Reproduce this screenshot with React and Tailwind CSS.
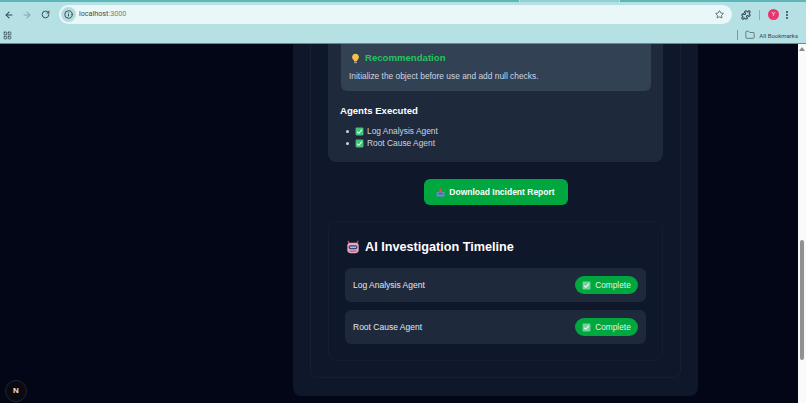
import React from "react";
import { ArrowLeft, ArrowRight, RotateCw, Info, Star, Puzzle, EllipsisVertical, Folder, LayoutGrid } from "lucide-react";

const AGENTS = ["Log Analysis Agent", "Root Cause Agent"];

function CheckEmoji({ className }) {
    return (
        <svg viewBox="0 0 16 16" className={className}>
            <rect x="1" y="1" width="14" height="14" rx="2" fill="#3fc47a" />
            <path d="M3.8 8.4 6.8 11.2 12.4 4.8" fill="none" stroke="#f1f5f9" strokeWidth="2" />
        </svg>
    );
}

function PillCheck() {
    return (
        <svg viewBox="0 0 16 16" className="w-[9px] h-[9px] shrink-0">
            <rect x="1" y="1" width="14" height="14" rx="1.5" fill="#6fd39a" />
            <path d="M3.8 8.4 6.8 11.2 12.4 4.8" fill="none" stroke="#f1f5f9" strokeWidth="2" />
        </svg>
    );
}

function Bulb() {
    return (
        <svg viewBox="0 0 16 16" className="w-[11px] h-[11px] shrink-0">
            <path d="M8 1a5 5 0 0 0-3 9c.6.5.9 1 1 1.6h4c.1-.6.4-1.1 1-1.6A5 5 0 0 0 8 1z" fill="#f8c04a" />
            <rect x="6" y="12" width="4" height="3" rx="1" fill="#9aa3ad" />
        </svg>
    );
}

function Tray() {
    return (
        <svg viewBox="0 0 16 16" className="w-[9px] h-[9px] shrink-0">
            <rect x="1" y="7" width="14" height="8" rx="1" fill="#5b8fd6" />
            <rect x="4" y="9" width="8" height="2" fill="#2f5fa8" />
            <path d="M6.5 1h3v4H12L8 9 4 5h2.5z" fill="#d9534f" />
        </svg>
    );
}

function Robot() {
    return (
        <svg viewBox="0 0 16 16" className="w-[14px] h-[14px] shrink-0">
            <path d="M2 1l2 3M14 1l-2 3" stroke="#d0475f" strokeWidth="1.5" />
            <rect x="1.5" y="3" width="13" height="12" rx="3.5" fill="#e6a9c4" />
            <rect x="3" y="6" width="10" height="4.5" rx="2" fill="#3b3f73" />
            <rect x="4.5" y="7.5" width="7" height="1.5" fill="#b9c6f5" />
            <rect x="4" y="12" width="8" height="1.5" fill="#a56a92" />
        </svg>
    );
}

export default function App() {
    return (
        <div className="relative w-[806px] h-[403px] overflow-hidden flex flex-col font-['Liberation_Sans',sans-serif]">
            {/* Browser chrome */}
            <div className="h-[44px] shrink-0 bg-[#b5e0e4] border-b border-[#5f8f96] flex flex-col">
                <div className="h-[2px] flex gap-[1px] bg-[#b5e0e4]">
                    <div className="w-[519px] bg-[#5cb8b8]" />
                    <div className="w-[99px] bg-[#8fd0d0]" />
                    <div className="flex-1 bg-[#5cb8b8]" />
                </div>
                <div className="h-[25px] flex items-center text-[#33474d]">
                    <ArrowLeft className="w-[10px] h-[10px] ml-[4px]" strokeWidth={2.5} />
                    <ArrowRight className="w-[10px] h-[10px] ml-[8px] text-[#85a5aa]" strokeWidth={2.5} />
                    <RotateCw className="w-[9px] h-[9px] ml-[9px]" strokeWidth={2.5} />
                    <div className="ml-[9px] w-[673px] h-[19px] rounded-full bg-[#e9f7f8] flex items-center">
                        <div className="ml-[2px] w-[15px] h-[15px] rounded-full bg-[#b5dde0] flex items-center justify-center">
                            <Info className="w-[9px] h-[9px]" strokeWidth={2.5} />
                        </div>
                        <span className="ml-[3px] text-[7.2px] text-[#3c4a4e] font-['Roboto',sans-serif]">
                            localhost<span className="text-[#6f8085]">:3000</span>
                        </span>
                        <Star className="w-[9px] h-[9px] ml-auto mr-[8px]" strokeWidth={2} />
                    </div>
                    <Puzzle className="w-[10px] h-[10px] ml-[9px]" strokeWidth={2.5} />
                    <div className="w-[1px] h-[10px] bg-[#7fb3b8] ml-[8px]" />
                    <div className="ml-[8px] w-[11px] h-[11px] rounded-full bg-[#e8356f] text-white text-[6px] flex items-center justify-center">
                        Y
                    </div>
                    <EllipsisVertical className="w-[10px] h-[10px] ml-[3px]" strokeWidth={3} />
                </div>
                <div className="flex-1 flex items-center text-[#33474d]">
                    <LayoutGrid className="w-[9px] h-[9px] ml-[3px]" strokeWidth={2} />
                    <div className="w-[1px] h-[10px] bg-[#5fa5aa] ml-auto" />
                    <Folder className="w-[10px] h-[10px] ml-[7px]" strokeWidth={1.5} />
                    <span className="ml-[4px] mr-[8px] text-[6px] font-['Roboto',sans-serif]">All Bookmarks</span>
                </div>
            </div>

            <div className="flex-1 min-h-0 flex">
                {/* Page */}
                <div className="flex-1 bg-[#020617] pl-[293px] pr-[100px] pb-[7px] flex">
                    <div className="flex-1 bg-[#0f172a] rounded-b-lg px-[17px] pb-[18px] flex">
                        <div className="flex-1 border-x border-b border-[#162032] rounded-b-lg px-[17px] pb-[16px] flex flex-col">
                            <div className="h-[118px] bg-[#1e293b] rounded-b-lg pl-[13px] pr-[12px] flex flex-col">
                                <div className="h-[47px] bg-[#334155] rounded-b-md px-[8px] flex flex-col">
                                    <div className="mt-[7px] flex items-center gap-[4px] text-[#22c55e]">
                                        <div className="ml-[1px]"><Bulb /></div>
                                        <span className="text-[9.6px] leading-[14px] font-bold">Recommendation</span>
                                    </div>
                                    <p className="mt-[5px] text-[8.4px] leading-[12px] text-[#cbd5e1]">
                                        Initialize the object before use and add null checks.
                                    </p>
                                </div>
                                <h3 className="mt-[13px] -ml-[1px] text-[9.6px] leading-[14px] font-bold text-white">Agents Executed</h3>
                                <ul className="mt-[7px] flex flex-col">
                                    {AGENTS.map((agent) => (
                                        <li key={agent} className="h-[12.5px] flex items-center text-[8.4px] text-[#cbd5e1]">
                                            <span className="ml-[5px] w-[3px] h-[3px] rounded-full bg-[#cbd5e1]" />
                                            <CheckEmoji className="ml-[6px] w-[9px] h-[9px]" />
                                            <span className="ml-[3px]">{agent}</span>
                                        </li>
                                    ))}
                                </ul>
                            </div>

                            <button className="mt-[17px] self-center w-[144px] h-[26px] shrink-0 rounded-md bg-[#00a63e] text-white text-[8.5px] font-bold flex items-center justify-center gap-[4px]">
                                <Tray />
                                <span className="mt-[1px]">Download Incident Report</span>
                            </button>

                            <div className="mt-[16px] flex-1 border border-[#151e30] rounded-lg px-[16px] flex flex-col">
                                <div className="mt-[16px] flex items-center gap-[5px] ml-[1px]">
                                    <Robot />
                                    <h2 className="text-[12.66px] leading-[18px] font-bold text-white">AI Investigation Timeline</h2>
                                </div>
                                <div className="mt-[12px] flex flex-col gap-[8px]">
                                    {AGENTS.map((agent) => (
                                        <div key={agent} className="h-[34px] bg-[#1e293b] rounded-md pl-[8px] pr-[8px] flex items-center justify-between">
                                            <span className="mt-[1px] text-[8.5px] text-[#e2e8f0]">{agent}</span>
                                            <span className="w-[63px] h-[18px] rounded-full bg-[#00a63e] text-[#e2f5e9] text-[8.3px] flex items-center justify-center gap-[4px]">
                                                <PillCheck />
                                                Complete
                                            </span>
                                        </div>
                                    ))}
                                </div>
                            </div>
                        </div>
                    </div>
                </div>

                {/* Scrollbar */}
                <div className="w-[8px] shrink-0 bg-[#fafafa] flex flex-col items-center">
                    <div className="mt-[3px] w-0 h-0 border-x-[3px] border-x-transparent border-b-[4px] border-b-[#8a8a8a]" />
                    <div className="mt-[189px] w-[4px] h-[120px] rounded-sm bg-[#909090]" />
                </div>
            </div>

            {/* Next dev badge */}
            <div className="absolute left-[5px] top-[380px] w-[22px] h-[22px] rounded-full bg-[#0a0a12] border border-[#25252c] flex items-center justify-center text-[#e5e5e5] text-[8px] font-bold">
                N
            </div>
        </div>
    );
}
